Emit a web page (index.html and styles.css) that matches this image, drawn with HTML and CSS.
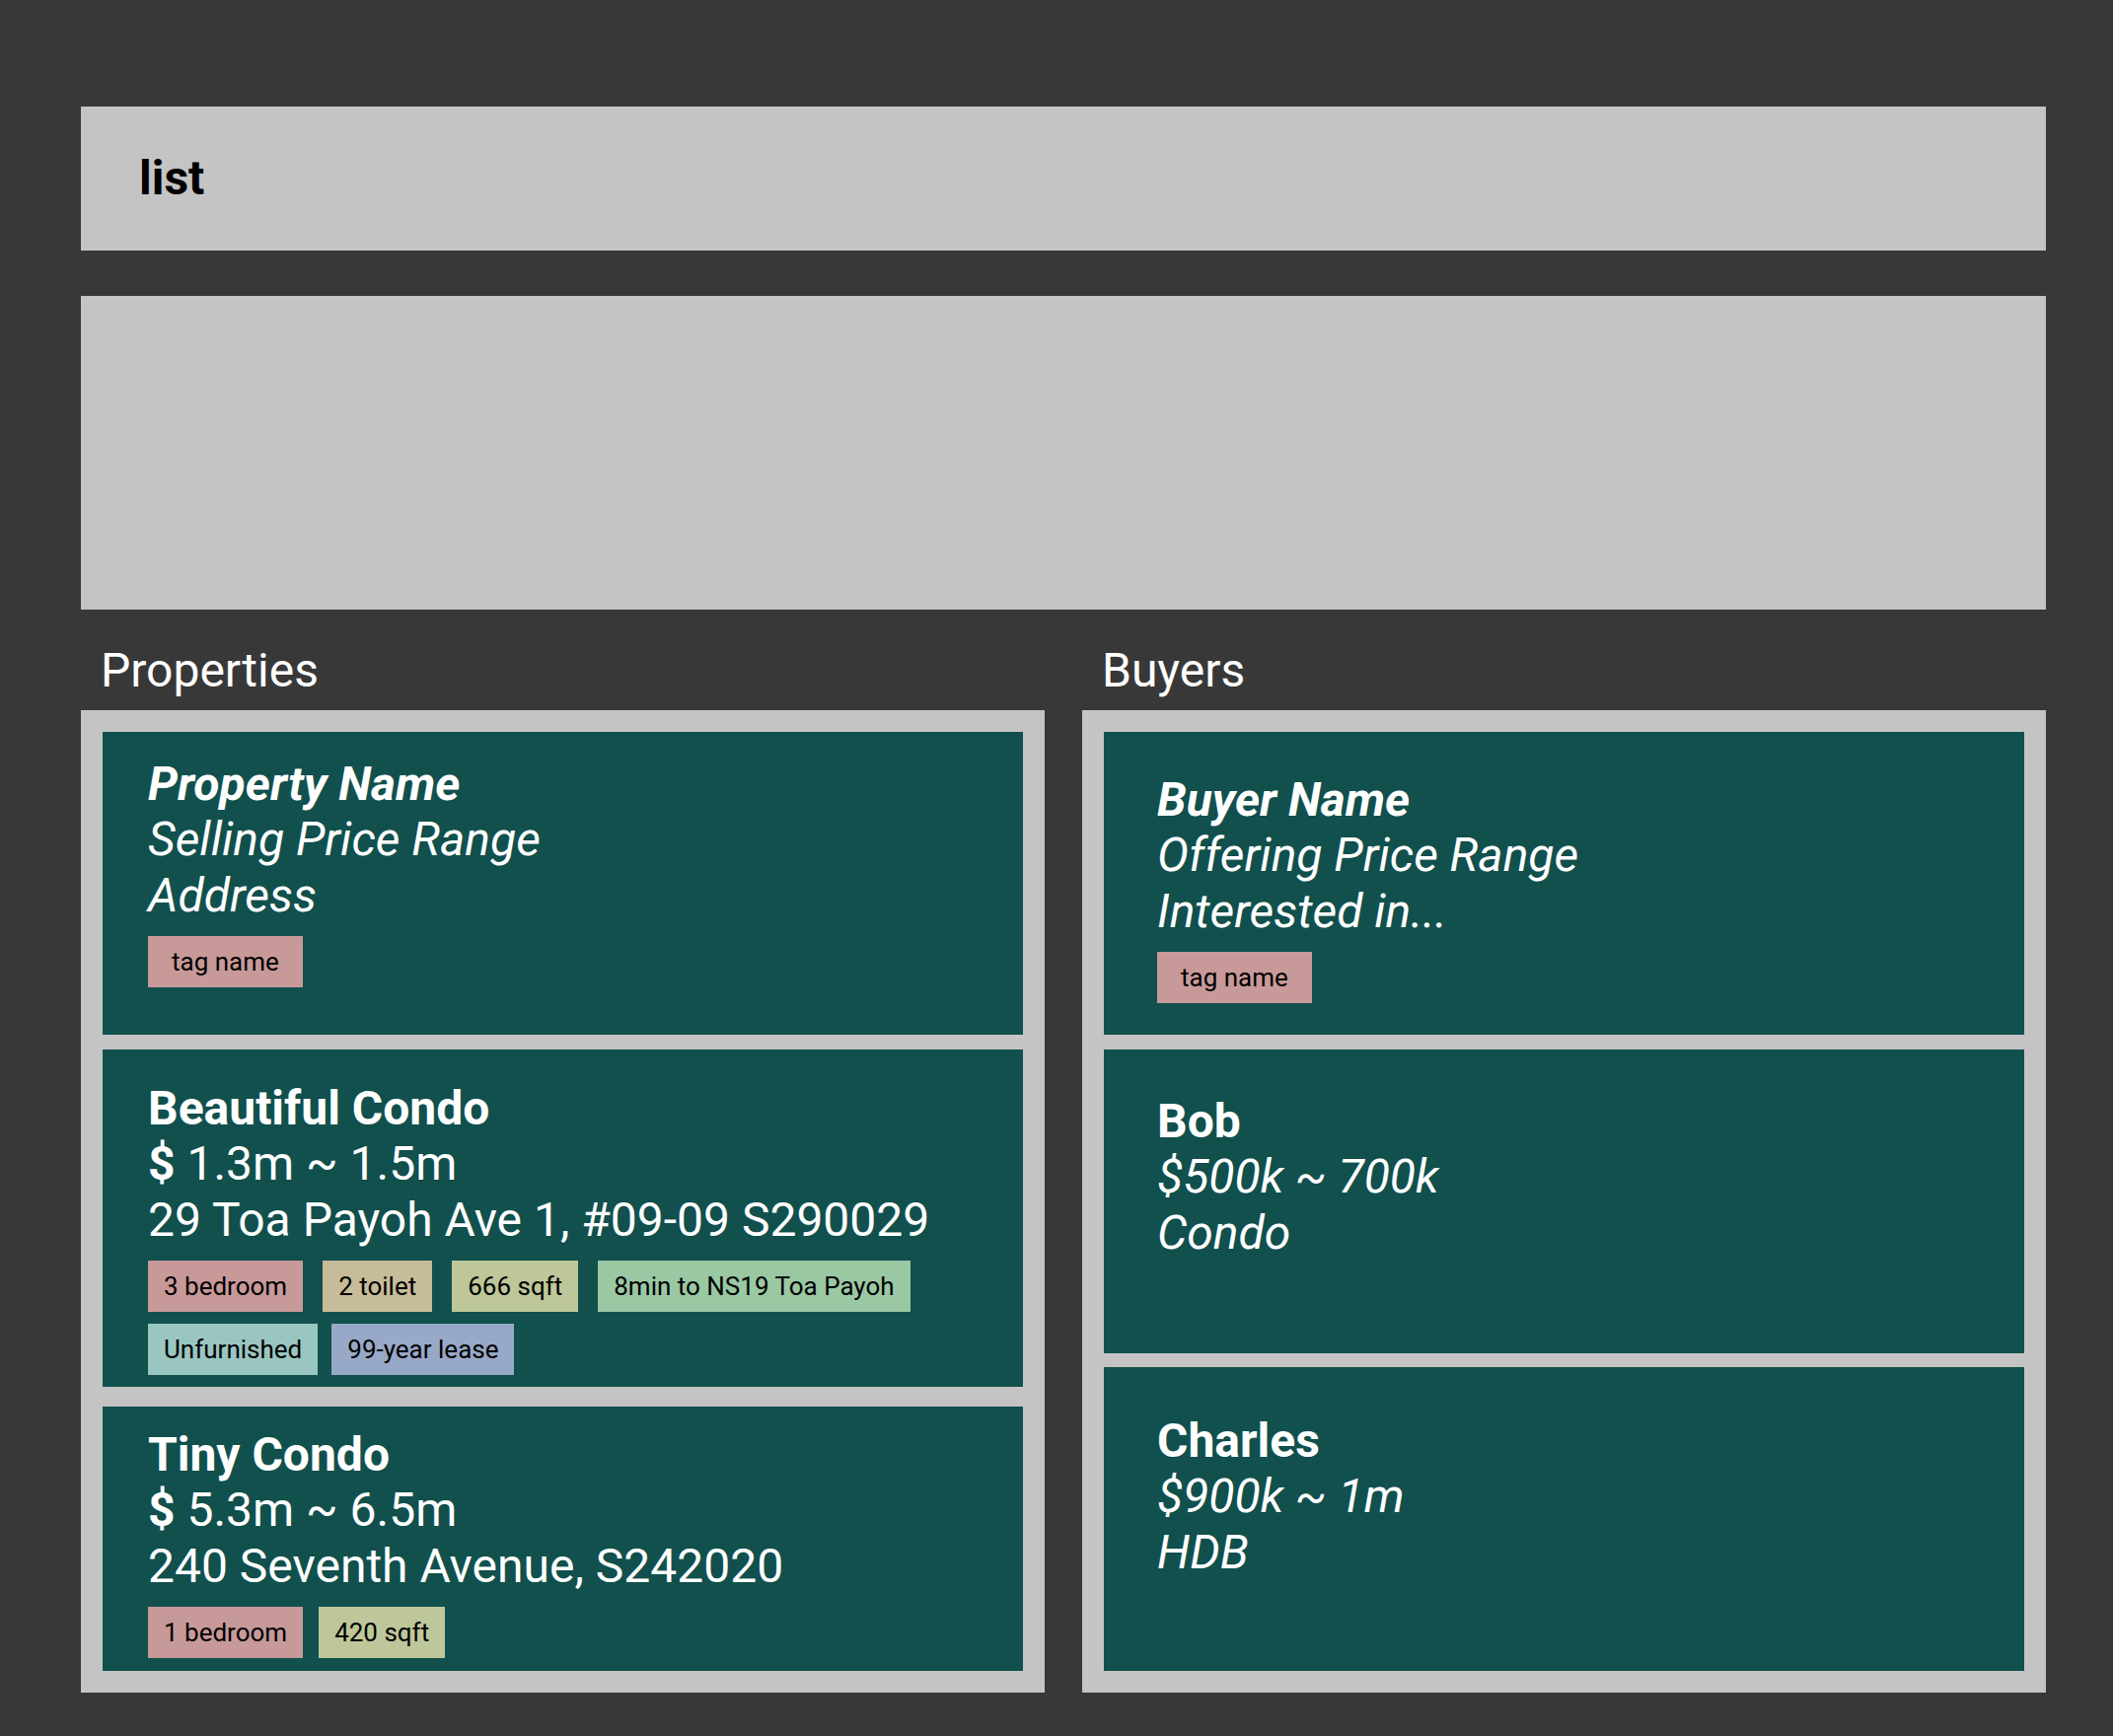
FILE: index.html
```html
<!DOCTYPE html>
<html lang="en">
<head>
<meta charset="utf-8">
<title>list</title>
<link rel="stylesheet" href="styles.css">
</head>
<body>
<div class="page">
  <header class="toolbar"><span class="toolbar-title">list</span></header>
  <section class="result-box"></section>
  <main class="lists">
    <section class="column">
      <h2 class="column-title">Properties</h2>
      <div class="panel">
        <article class="card prop-1">
          <div class="line bold italic">Property Name</div>
          <div class="line italic">Selling Price Range</div>
          <div class="line italic">Address</div>
          <div class="tags"><span class="tag tag-pink tag-wide">tag name</span></div>
        </article>
        <article class="card prop-2">
          <div class="line bold">Beautiful Condo</div>
          <div class="line"><b>$</b> 1.3m ~ 1.5m</div>
          <div class="line">29 Toa Payoh Ave 1, #09-09 S290029</div>
          <div class="tags">
            <span class="tag tag-pink">3 bedroom</span>
            <span class="tag tag-tan">2 toilet</span>
            <span class="tag tag-olive">666 sqft</span>
            <span class="tag tag-green">8min to NS19 Toa Payoh</span>
            <span class="tag tag-teal">Unfurnished</span>
            <span class="tag tag-blue tag-close">99-year lease</span>
          </div>
        </article>
        <article class="card prop-3">
          <div class="line bold">Tiny Condo</div>
          <div class="line"><b>$</b> 5.3m ~ 6.5m</div>
          <div class="line">240 Seventh Avenue, S242020</div>
          <div class="tags">
            <span class="tag tag-pink">1 bedroom</span>
            <span class="tag tag-olive tag-near">420 sqft</span>
          </div>
        </article>
      </div>
    </section>
    <section class="column">
      <h2 class="column-title">Buyers</h2>
      <div class="panel">
        <article class="card buyer buyer-1">
          <div class="line bold italic">Buyer Name</div>
          <div class="line italic">Offering Price Range</div>
          <div class="line italic">Interested in...</div>
          <div class="tags"><span class="tag tag-pink tag-wide">tag name</span></div>
        </article>
        <article class="card buyer buyer-2">
          <div class="line bold">Bob</div>
          <div class="line italic">$500k ~ 700k</div>
          <div class="line italic">Condo</div>
        </article>
        <article class="card buyer buyer-3">
          <div class="line bold">Charles</div>
          <div class="line italic">$900k ~ 1m</div>
          <div class="line italic">HDB</div>
        </article>
      </div>
    </section>
  </main>
</div>
</body>
</html>
```
FILE: styles.css
```css
html, body {
  margin: 0;
  padding: 0;
}

body {
  background: #383838;
  font-family: Roboto, "Liberation Sans", sans-serif;
}

.page {
  box-sizing: border-box;
  width: 2142px;
  padding: 108px 68px 0 82px;
}

.toolbar {
  box-sizing: border-box;
  height: 146px;
  padding: 45px 59px;
  background: #c4c4c4;
}

.toolbar-title {
  font-size: 48px;
  font-weight: 700;
  line-height: 56px;
  color: #000;
}

.result-box {
  margin-top: 46px;
  height: 318px;
  background: #c4c4c4;
}

.lists {
  display: grid;
  grid-template-columns: 1fr 1fr;
  column-gap: 38px;
}

.column-title {
  margin: 0;
  padding: 34px 0 12px 20px;
  font-size: 48px;
  font-weight: 400;
  line-height: 56px;
  color: #fff;
}

.panel {
  box-sizing: border-box;
  height: 996px;
  padding: 22px;
  background: #c4c4c4;
  display: flex;
  flex-direction: column;
}

.card {
  box-sizing: border-box;
  flex: none;
  background: #11504d;
  color: #fff;
  padding-left: 46px;
  padding-right: 46px;
}

.card.buyer {
  padding-left: 54px;
}

.prop-1 { height: 307px; padding-top: 25px; }
.prop-2 { height: 342px; padding-top: 32px; margin-top: 15px; }
.prop-3 { height: 268px; padding-top: 21px; margin-top: 20px; }

.buyer-1 { height: 307px; padding-top: 41px; }
.buyer-2 { height: 308px; padding-top: 45px; margin-top: 15px; }
.buyer-3 { height: 308px; padding-top: 47px; margin-top: 14px; }

.line {
  font-size: 48px;
  line-height: 56.25px;
  font-weight: 400;
  white-space: nowrap;
}

.line b {
  font-weight: 700;
}

.bold {
  font-weight: 700;
}

.italic {
  font-style: italic;
}

.tags {
  display: flex;
  flex-wrap: wrap;
  gap: 12px 20px;
  margin-top: 13px;
}

.tag {
  display: block;
  padding: 11px 16px;
  font-size: 26px;
  line-height: 30px;
  color: #000;
  white-space: nowrap;
}

.tag-wide {
  padding-left: 24px;
  padding-right: 24px;
}

.tag-close {
  margin-left: -6px;
}

.tag-near {
  margin-left: -4px;
}

.tag-pink  { background: #c89999; }
.tag-tan   { background: #c6bc99; }
.tag-olive { background: #bec799; }
.tag-green { background: #99c8a3; }
.tag-teal  { background: #99c6c0; }
.tag-blue  { background: #98a8c7; }
```
